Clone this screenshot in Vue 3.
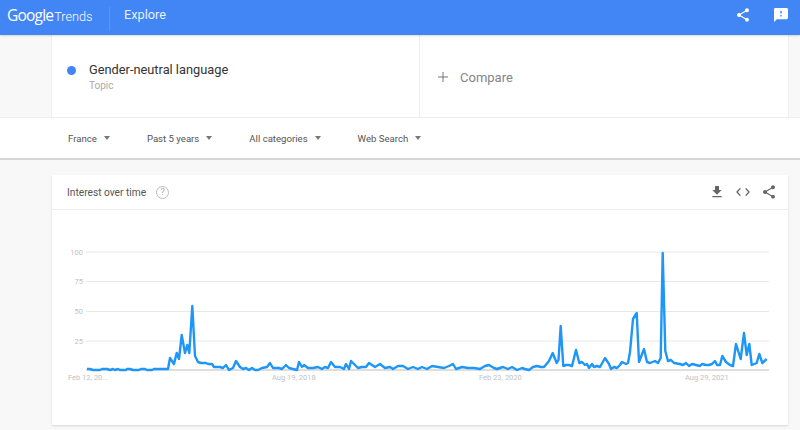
<script setup>
const filters = ['France', 'Past 5 years', 'All categories', 'Web Search']

const grid = [
  { y: 251, label: '100' },
  { y: 280.5, label: '75' },
  { y: 310.5, label: '50' },
  { y: 340, label: '25' }
]

const dates = [
  { x: 68, label: 'Feb 12, 20...' },
  { x: 272, label: 'Aug 19, 2018' },
  { x: 479, label: 'Feb 23, 2020' },
  { x: 685, label: 'Aug 29, 2021' }
]

const sharePath = 'M18 16.08c-.76 0-1.44.3-1.96.77L8.91 12.7c.05-.23.09-.46.09-.7s-.04-.47-.09-.7l7.05-4.11c.54.5 1.25.81 2.04.81 1.66 0 3-1.34 3-3s-1.34-3-3-3-3 1.34-3 3c0 .24.04.47.09.7L8.04 9.81C7.5 9.31 6.79 9 6 9c-1.66 0-3 1.34-3 3s1.34 3 3 3c.79 0 1.5-.31 2.04-.81l7.12 4.16c-.05.21-.08.43-.08.65 0 1.61 1.31 2.92 2.92 2.92 1.61 0 2.92-1.31 2.92-2.92s-1.31-2.92-2.92-2.92z'

// pixel points read off the reference chart
const points = [
  [87, 368], [90, 368], [93, 369], [100, 369], [102, 368], [107, 368], [110, 369], [113, 368], [115, 369], [118, 368],
  [120, 369], [126, 369], [127, 368], [130, 368], [133, 369], [139, 369], [141, 368], [145, 368], [147, 369], [152, 369],
  [154, 368], [168, 368], [170, 357], [174, 363], [176.7, 352], [179, 358], [181.7, 334], [185, 352], [187.3, 344], [189.3, 352],
  [192.3, 305], [195, 355], [198, 361], [201, 362], [206, 362], [208, 363], [212, 363], [214, 366], [220, 366], [223, 367],
  [226, 364], [229, 369], [233, 367], [236, 360], [240, 366], [243, 368], [246, 367], [249, 369], [252, 367], [255, 369],
  [258, 369], [262, 367], [267, 366], [270, 362], [273, 367], [279, 367], [282, 368], [286, 364], [289, 367], [293, 368],
  [297, 369], [299, 361], [302, 366], [304, 364], [308, 367], [313, 367], [318, 366], [322, 368], [325, 366], [328, 367],
  [331, 361], [335, 366], [340, 366], [344, 368], [346, 363], [349, 368], [351, 360], [355, 364], [358, 367], [362, 366],
  [366, 366], [369, 362], [375, 366], [380, 363], [385, 367], [390, 366], [393, 368], [398, 365], [403, 365], [408, 368],
  [413, 366], [418, 368], [422, 366], [427, 368], [432, 365], [438, 366], [444, 367], [449, 365], [453, 363], [456, 368],
  [462, 366], [468, 367], [474, 367], [480, 368], [485, 365], [489, 364], [494, 367], [497, 368], [503, 366], [508, 368],
  [512, 366], [517, 369], [522, 367], [525, 368], [529, 369], [533, 366], [537, 365], [541, 366], [544, 366], [549, 360],
  [552.7, 352], [556.7, 362], [558.5, 359], [560.7, 325], [563.3, 365], [566, 364], [569, 364], [572, 365], [576, 349], [579.3, 362],
  [582, 361], [585, 364], [587, 363], [589, 367], [592, 363], [594, 366], [597, 365], [600, 366], [605, 357], [609, 363],
  [611, 368], [614, 366], [617, 367], [620, 364], [622, 361], [626, 363], [628, 362], [630, 351], [633, 318], [636.7, 312],
  [639, 361], [644, 348], [647, 361], [650, 362], [655, 360], [658, 362], [660.7, 357], [662.7, 252], [665.3, 350], [668, 360],
  [671, 359], [674, 362], [680, 363], [683, 364], [686, 362], [689, 365], [692, 363], [696, 364], [700, 365], [702, 363],
  [706, 364], [709, 364], [712, 363], [715, 360], [717, 364], [720, 364], [722.3, 355], [726, 361], [730, 364], [733, 365],
  [736, 343], [740.7, 358], [744, 332], [746.7, 354], [749.3, 343], [751.7, 364], [756.7, 362], [759.3, 353], [762.3, 362], [766.7, 358]
]

const line = points.map(p => p[0] + ',' + (p[1] - 209)).join(' ')
</script>

<template>
  <div class="page">
    <header class="topbar">
      <div class="logo"><span class="google">Google</span><span class="trends">Trends</span></div>
      <div class="title">Explore</div>
      <div class="top-actions">
        <svg class="top-share" viewBox="0 0 24 24"><path :d="sharePath"/></svg>
        <svg class="top-feedback" viewBox="0 0 20 20"><path d="M18 0H2C.9 0 .01.9.01 2L0 20l4-4h14c1.1 0 2-.9 2-2V2c0-1.1-.9-2-2-2zm-7 12H9v-2h2v2zm0-4H9V4h2v4z"/></svg>
      </div>
    </header>

    <section class="search">
      <div class="term">
        <span class="dot"></span>
        <div>
          <div class="term-name">Gender-neutral language</div>
          <div class="term-type">Topic</div>
        </div>
      </div>
      <div class="compare">
        <svg class="plus" viewBox="0 0 10 10"><path d="M5 0v10M0 5h10"/></svg>
        <span>Compare</span>
      </div>
    </section>

    <section class="filters">
      <div v-for="f in filters" :key="f" class="filter">
        <span>{{ f }}</span>
        <span class="caret"></span>
      </div>
    </section>

    <main class="card">
      <div class="card-head">
        <span class="card-title">Interest over time</span>
        <span class="help">?</span>
        <div class="card-actions">
          <svg viewBox="0 0 24 24"><path d="M19 9h-4V3H9v6H5l7 7 7-7zM5 18v2h14v-2H5z"/></svg>
          <svg viewBox="0 0 24 24"><path class="code" d="M8 6.5L3 12l5 5.5M16 6.5l5 5.5-5 5.5"/></svg>
          <svg viewBox="0 0 24 24"><path :d="sharePath"/></svg>
        </div>
      </div>
      <svg class="chart" width="800" height="216" viewBox="0 0 800 216">
        <g v-for="g in grid" :key="g.label">
          <line x1="86" x2="769" :y1="g.y - 209" :y2="g.y - 209" stroke="#e8e8e8" />
          <text x="83" :y="g.y - 206.5" text-anchor="end" class="tick">{{ g.label }}</text>
        </g>
        <line x1="86" x2="769" y1="160" y2="160" stroke="#bdbdbd" />
        <text v-for="d in dates" :key="d.label" :x="d.x" y="170" class="tick">{{ d.label }}</text>
        <polyline :points="line" fill="none" stroke="#1e96f7" stroke-width="2.4" stroke-linejoin="round" />
      </svg>
    </main>
  </div>
</template>

<style scoped>
.page {
  width: 800px;
  height: 430px;
  overflow: hidden;
  font-family: Roboto, "Liberation Sans", sans-serif;
  background: #f8f8f8;
}

.topbar {
  display: flex;
  align-items: center;
  height: 35px;
  padding: 0 12px 0 7px;
  background: #4285f4;
  color: #fff;
  box-shadow: 0 1px 2px rgba(0, 0, 0, 0.15);
  position: relative;
}

.logo {
  display: flex;
  align-items: baseline;
  width: 102px;
  height: 24px;
  border-right: 1px solid #5b95f5;
  line-height: 17px;
  margin-top: 2px;
}

.google {
  font-family: "Open Sans", sans-serif;
  font-size: 15.5px;
  letter-spacing: -0.8px;
  margin-right: 1px;
}

.trends {
  font-size: 12.7px;
  font-weight: 300;
}

.title {
  margin-left: 14px;
  margin-top: -6px;
  font-size: 12.7px;
  color: #e8f0fe;
}

.top-actions {
  margin-left: auto;
  display: flex;
  align-items: center;
  gap: 23px;
  padding-bottom: 5px;
}

.top-share {
  width: 16px;
  height: 16px;
  fill: #fff;
}

.top-feedback {
  width: 14px;
  height: 14px;
  fill: #fff;
}

.search {
  display: flex;
  height: 82px;
  margin-left: 51px;
  width: 738px;
  box-sizing: border-box;
  background: #fff;
  border-left: 1px solid #eee;
  border-right: 1px solid #eee;
}

.term {
  display: flex;
  align-items: center;
  gap: 13px;
  width: 368px;
  padding-left: 15px;
  box-sizing: border-box;
  border-right: 1px solid #eee;
}

.dot {
  width: 9px;
  height: 9px;
  border-radius: 50%;
  background: #4285f4;
  margin-top: -12px;
}

.term-name {
  font-size: 12.8px;
  color: #333;
  line-height: 18px;
  margin-top: 1px;
}

.term-type {
  font-size: 10px;
  color: #aaa;
  line-height: 13px;
}

.compare {
  display: flex;
  align-items: center;
  gap: 12px;
  padding: 2px 0 0 18px;
  font-size: 13px;
  color: #80868b;
}

.plus {
  width: 10px;
  height: 10px;
  fill: none;
  stroke: #777;
  stroke-width: 1;
}

.filters {
  display: flex;
  align-items: center;
  gap: 37px;
  height: 43px;
  padding-left: 68px;
  background: #fff;
  border-top: 1px solid #eee;
  border-bottom: 2px solid #d6d6d6;
  box-sizing: border-box;
  font-size: 9.6px;
  color: #555;
}

.filter {
  display: flex;
  align-items: center;
  gap: 7px;
}

.caret {
  width: 0;
  height: 0;
  border-left: 3.5px solid transparent;
  border-right: 3.5px solid transparent;
  border-top: 4px solid #777;
}

.card {
  margin: 15px 0 0 52px;
  width: 736px;
  height: 250px;
  background: #fff;
  box-shadow: 0 1px 2px rgba(0, 0, 0, 0.15);
  overflow: hidden;
}

.card-head {
  display: flex;
  align-items: center;
  height: 34px;
  padding: 0 11px 0 15px;
  border-bottom: 1px solid #eee;
}

.card-title {
  font-size: 10.2px;
  color: #555;
}

.help {
  width: 11px;
  height: 11px;
  margin-left: 10px;
  border: 1px solid #bbb;
  border-radius: 50%;
  font-size: 9px;
  line-height: 11px;
  text-align: center;
  color: #aaa;
}

.card-actions {
  margin-left: auto;
  display: flex;
  align-items: center;
  gap: 10px;
}

.card-actions svg {
  width: 16px;
  height: 16px;
  fill: #666;
}

.card-actions .code {
  fill: none;
  stroke: #666;
  stroke-width: 2;
}

.chart {
  display: block;
  margin-left: -52px;
}

.tick {
  font-size: 7.5px;
  fill: #c2c2c2;
}
</style>

<style>
body {
  background: #f8f8f8;
}
</style>
